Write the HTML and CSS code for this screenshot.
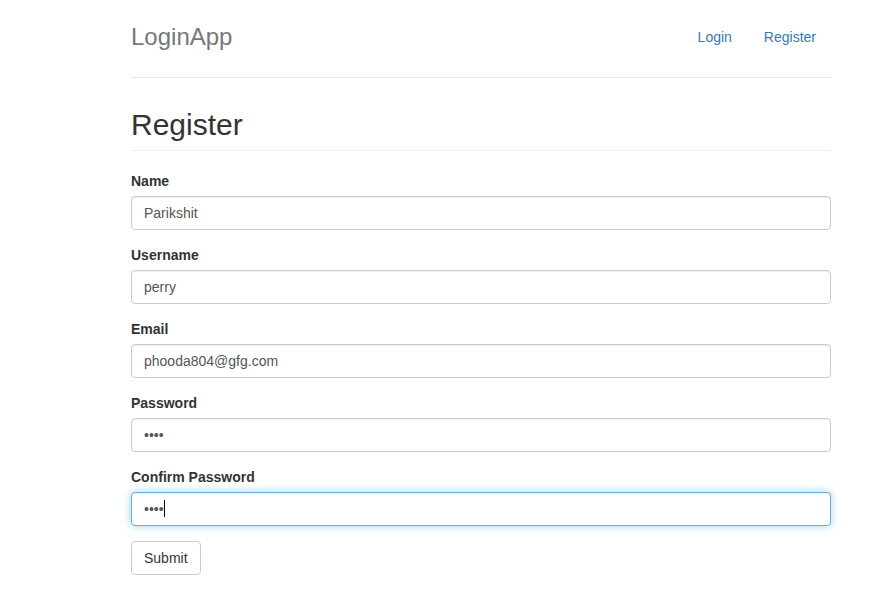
FILE: index.html
```html
<!DOCTYPE html>
<html lang="en">
<head>
<meta charset="utf-8">
<title>LoginApp</title>
<link rel="stylesheet" href="styles.css">
</head>
<body>
<div class="container">
  <header class="header">
    <h3 class="brand">LoginApp</h3>
    <nav class="nav">
      <a href="#" class="nav-link">Login</a>
      <a href="#" class="nav-link">Register</a>
    </nav>
  </header>

  <div class="page-header">
    <h2 class="title">Register</h2>
  </div>

  <form class="form">
    <div class="form-group">
      <label class="label">Name</label>
      <input class="form-control" type="text" value="Parikshit">
    </div>
    <div class="form-group">
      <label class="label">Username</label>
      <input class="form-control" type="text" value="perry">
    </div>
    <div class="form-group">
      <label class="label">Email</label>
      <input class="form-control" type="email" value="phooda804@gfg.com">
    </div>
    <div class="form-group">
      <label class="label">Password</label>
      <input class="form-control" type="password" value="abcd">
    </div>
    <div class="form-group">
      <label class="label">Confirm Password</label>
      <div class="field">
        <input class="form-control is-focused" type="password" value="abcd">
        <span class="caret"></span>
      </div>
    </div>
    <button type="button" class="btn">Submit</button>
  </form>
</div>
</body>
</html>
```

FILE: styles.css
```css
* { box-sizing: border-box; }

html, body {
  margin: 0;
  padding: 0;
  background: #fff;
}

body {
  font-family: "Liberation Sans", Arial, Helvetica, sans-serif;
  font-size: 14px;
  line-height: 20px;
  color: #333;
}

.container {
  width: 700px;
  margin-left: 131px;
  padding-top: 17px;
}

.header {
  display: flex;
  justify-content: space-between;
  align-items: flex-start;
  padding-bottom: 20px;
  border-bottom: 1px solid #e5e5e5;
}

.brand {
  margin: 0;
  font-size: 24px;
  font-weight: 400;
  line-height: 40px;
  color: #777;
}

.nav {
  display: flex;
  gap: 2px;
}

.nav-link {
  display: block;
  padding: 10px 15px;
  line-height: 20px;
  color: #337ab7;
  text-decoration: none;
  border-radius: 4px;
}

.page-header {
  margin: 30px 0 20px;
  padding-bottom: 9px;
  border-bottom: 1px solid #eee;
}

.title {
  margin: 0;
  font-size: 30px;
  font-weight: 400;
  line-height: 33px;
  color: #333;
}

.form-group {
  margin-bottom: 15px;
}

.label {
  display: inline-block;
  margin-bottom: 5px;
  font-weight: 700;
}

.field {
  position: relative;
}

.form-control {
  display: block;
  width: 100%;
  height: 34px;
  padding: 6px 12px;
  font-family: inherit;
  font-size: 14px;
  line-height: 20px;
  color: #555;
  background: #fff;
  border: 1px solid #ccc;
  border-radius: 4px;
  box-shadow: inset 0 1px 1px rgba(0,0,0,.075);
  outline: none;
  margin: 0;
}

.form-control.is-focused {
  border-color: #66afe9;
  box-shadow: inset 0 1px 1px rgba(0,0,0,.075), 0 0 8px rgba(102,175,233,.6);
}

.caret {
  position: absolute;
  left: 33px;
  top: 8px;
  width: 1px;
  height: 17px;
  background: #000;
}

.btn {
  display: inline-block;
  height: 34px;
  padding: 6px 12px;
  font-family: inherit;
  font-size: 14px;
  line-height: 20px;
  color: #333;
  background: #fff;
  border: 1px solid #ccc;
  border-radius: 4px;
  cursor: pointer;
}
```
